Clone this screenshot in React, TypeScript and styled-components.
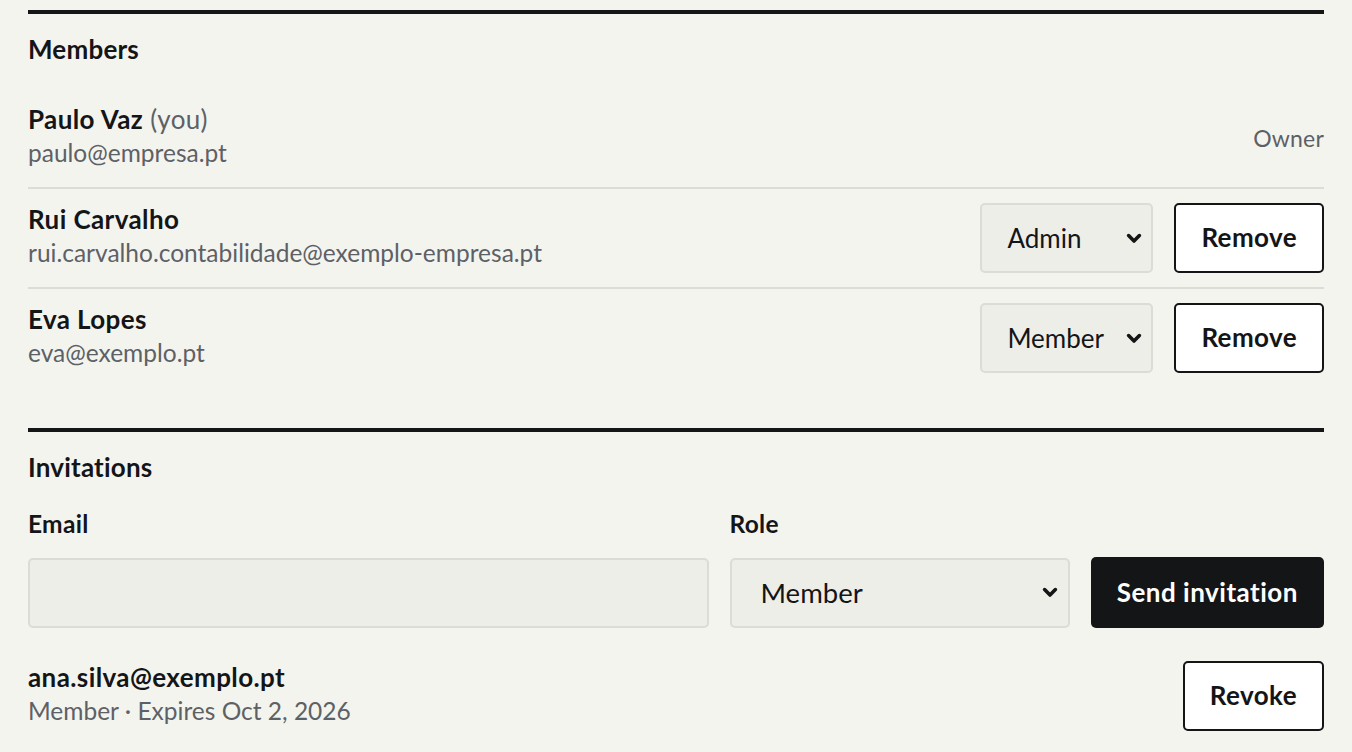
import styled, { createGlobalStyle } from 'styled-components'

const GlobalStyle = createGlobalStyle`
	html, body {
		margin: 0;
		padding: 0;
		background: #f4f4ef;
	}
	body {
		font-family: Lato, 'Noto Sans', sans-serif;
		color: #141517;
	}
	* {
		box-sizing: border-box;
	}
`

const chevron = (color: string) =>
	`url("data:image/svg+xml;utf8,<svg xmlns='http://www.w3.org/2000/svg' width='16' height='11' viewBox='0 0 16 11'><path d='M2.6 2.6 L8 8 L13.4 2.6' fill='none' stroke='${encodeURIComponent(
		color
	)}' stroke-width='3.6' stroke-linecap='round' stroke-linejoin='round'/></svg>")`

const members = [
	{ id: 'paulo', name: 'Paulo Vaz', email: 'paulo@empresa.pt', role: 'Owner', self: true },
	{ id: 'rui', name: 'Rui Carvalho', email: 'rui.carvalho.contabilidade@exemplo-empresa.pt', role: 'Admin' },
	{ id: 'eva', name: 'Eva Lopes', email: 'eva@exemplo.pt', role: 'Member' },
]

const invitations = [
	{ id: 'ana', email: 'ana.silva@exemplo.pt', role: 'Member', expires: 'Oct 2, 2026' },
]

export default function App() {
	return (
		<>
			<GlobalStyle />
			<Page>
				<Section>
					<SectionTitle>Members</SectionTitle>
					<List>
						{members.map((m) => (
							<Row key={m.id}>
								<Identity>
									<Primary>
										{m.name}
										{m.self && <You> (you)</You>}
									</Primary>
									<Secondary>{m.email}</Secondary>
								</Identity>
								{m.role === 'Owner' ? (
									<OwnerTag>Owner</OwnerTag>
								) : (
									<Actions>
										<RoleSelect defaultValue={m.role}>
											<option>Admin</option>
											<option>Member</option>
										</RoleSelect>
										<OutlineButton type="button">Remove</OutlineButton>
									</Actions>
								)}
							</Row>
						))}
					</List>
				</Section>

				<Section>
					<SectionTitle>Invitations</SectionTitle>
					<InviteForm onSubmit={(e) => e.preventDefault()}>
						<FieldLabel htmlFor="invite-email">Email</FieldLabel>
						<FieldLabel htmlFor="invite-role">Role</FieldLabel>
						<span />
						<TextInput id="invite-email" type="email" />
						<RoleSelect id="invite-role" $wide defaultValue="Member">
							<option>Admin</option>
							<option>Member</option>
						</RoleSelect>
						<PrimaryButton type="submit">Send invitation</PrimaryButton>
					</InviteForm>
					<InviteList>
						{invitations.map((inv) => (
							<Row key={inv.id} $plain>
								<Identity>
									<Primary>{inv.email}</Primary>
									<Secondary>
										{inv.role} · Expires {inv.expires}
									</Secondary>
								</Identity>
								<OutlineButton type="button">Revoke</OutlineButton>
							</Row>
						))}
					</InviteList>
				</Section>
			</Page>
		</>
	)
}

const Page = styled.main`
	padding: 10px 28px 0 28px;
`

const Section = styled.section`
	border-top: 4px solid #141517;
	padding-top: 18px;
	& + & {
		margin-top: 41px;
	}
`

const SectionTitle = styled.h2`
	margin: 0 0 23px 0;
	font-size: 26px;
	line-height: 34px;
	font-weight: 700;
	letter-spacing: 0.2px;
	color: #141517;
`

const List = styled.div`
	display: flex;
	flex-direction: column;
`

const Row = styled.div<{ $plain?: boolean }>`
	display: flex;
	align-items: center;
	justify-content: space-between;
	gap: 20px;
	padding: 14px 0;
	border-bottom: 2px solid ${(p) => (p.$plain ? 'transparent' : '#dcdcd6')};
	&:last-child {
		border-bottom: none;
	}
`

const Identity = styled.div`
	display: flex;
	flex-direction: column;
	min-width: 0;
	padding-bottom: 3px;
`

const Primary = styled.div`
	font-size: 26px;
	line-height: 32px;
	font-weight: 700;
	letter-spacing: 0.4px;
	color: #141517;
`

const You = styled.span`
	font-weight: 400;
	color: #5d6166;
`

const Secondary = styled.div`
	font-size: 24.5px;
	line-height: 35px;
	color: #5d6166;
`

const OwnerTag = styled.span`
	font-size: 23px;
	color: #5d6166;
	letter-spacing: 0.2px;
`

const Actions = styled.div`
	display: flex;
	align-items: center;
	gap: 21px;
`

const RoleSelect = styled.select<{ $wide?: boolean }>`
	appearance: none;
	-webkit-appearance: none;
	width: ${(p) => (p.$wide ? '100%' : '173px')};
	height: 70px;
	margin: 0;
	padding: 0 40px 0 ${(p) => (p.$wide ? '29px' : '25px')};
	font-family: inherit;
	font-size: ${(p) => (p.$wide ? '27.5px' : '26px')};
	color: #141517;
	background-color: #eeeee9;
	background-image: ${chevron('#141517')};
	background-repeat: no-repeat;
	background-position: right ${(p) => (p.$wide ? '10px' : '9px')} center;
	background-size: 16px 11px;
	border: 2px solid #dcdcd6;
	border-radius: 5px;
	outline: none;
`

const OutlineButton = styled.button`
	height: 70px;
	padding: 0 25px 2px;
	font-family: inherit;
	font-size: 26px;
	font-weight: 700;
	letter-spacing: 0.4px;
	color: #141517;
	background: #ffffff;
	border: 2px solid #141517;
	border-radius: 5px;
	cursor: pointer;
	white-space: nowrap;
`

const PrimaryButton = styled.button`
	height: 71px;
	padding: 0 26px 2px;
	font-family: inherit;
	font-size: 26px;
	font-weight: 700;
	letter-spacing: 0.5px;
	color: #ffffff;
	background: #141517;
	border: none;
	border-radius: 5px;
	cursor: pointer;
	white-space: nowrap;
	align-self: center;
`

const InviteForm = styled.form`
	display: grid;
	grid-template-columns: 2fr 1fr auto;
	column-gap: 21px;
	row-gap: 16px;
	align-items: center;
`

const FieldLabel = styled.label`
	font-size: 24.5px;
	line-height: 34px;
	font-weight: 700;
	letter-spacing: 0.3px;
	color: #141517;
`

const TextInput = styled.input`
	width: 100%;
	height: 70px;
	margin: 0;
	padding: 0 24px;
	font-family: inherit;
	font-size: 24px;
	color: #141517;
	background: #eeeee9;
	border: 2px solid #dcdcd6;
	border-radius: 5px;
	outline: none;
`

const InviteList = styled.div`
	display: flex;
	flex-direction: column;
	margin-top: 19px;
`
